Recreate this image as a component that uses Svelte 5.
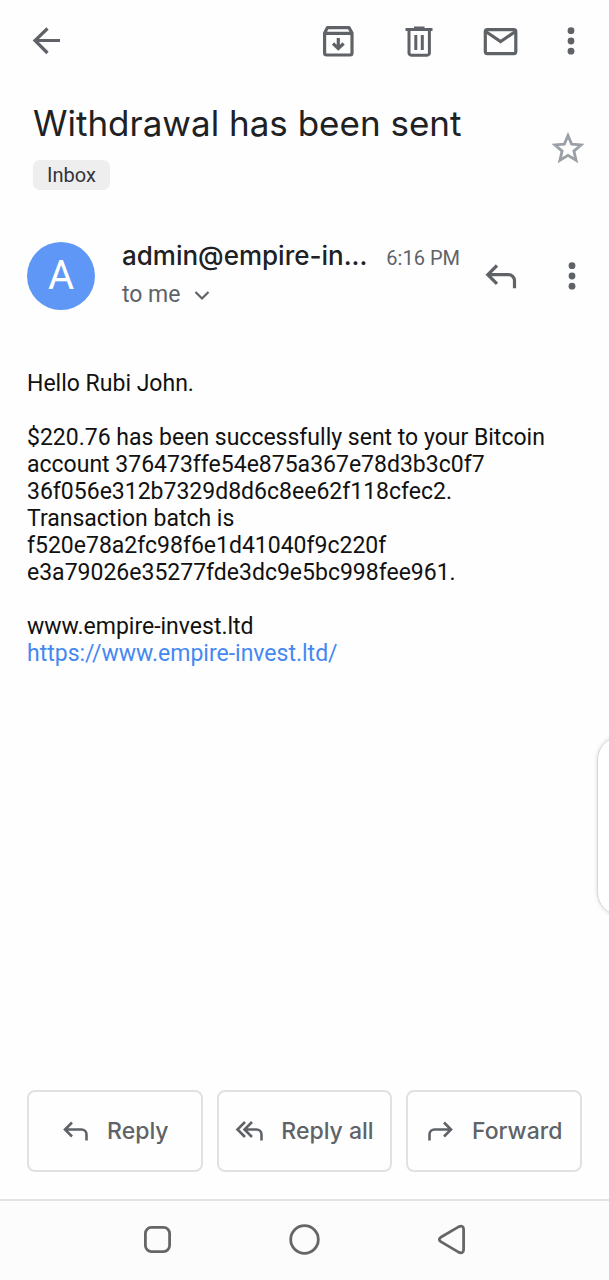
<script lang="ts">
	const subject = 'Withdrawal has been sent';
	const sender = 'admin@empire-in...';

	let starred = $state(false);
</script>

{#snippet dots()}
	<svg width="20" height="40" viewBox="0 0 20 40" fill="currentColor">
		<circle cx="10" cy="9.7" r="3.4" />
		<circle cx="10" cy="20" r="3.4" />
		<circle cx="10" cy="30.2" r="3.4" />
	</svg>
{/snippet}

<div class="screen">
	<header class="toolbar">
		<button class="icon-btn" aria-label="Navigate up">
			<svg width="40" height="40" viewBox="0 0 40 40" fill="none" stroke="currentColor" stroke-width="3.2">
				<path d="M33 19.5H8.5M20.5 7.5 8 19.5l12.5 12.5" />
			</svg>
		</button>
		<div class="toolbar-actions">
			<button class="icon-btn" aria-label="Archive">
				<svg width="40" height="40" viewBox="0 0 40 40" fill="none" stroke="currentColor" stroke-width="3.2" stroke-linejoin="round">
					<path d="M6.6 12 9.5 6.6h21.5L34 12v20a2 2 0 0 1-2 2H8.6a2 2 0 0 1-2-2zM6.6 12.4H34" />
					<path d="M20.3 17v10M15 22.5l5.3 5.1 5.3-5.1" stroke-linejoin="miter" />
				</svg>
			</button>
			<button class="icon-btn" aria-label="Delete">
				<svg width="40" height="40" viewBox="0 0 40 40" fill="none" stroke="currentColor" stroke-width="3">
					<path d="M6.5 8.5h27M15 7h10.5" />
					<path d="M10 8.5V32a2.2 2.2 0 0 0 2.2 2.2h16A2.2 2.2 0 0 0 30.4 32V8.5M16.8 14v15M23.3 14v15" />
				</svg>
			</button>
			<button class="icon-btn" aria-label="Mark as unread">
				<svg width="40" height="40" viewBox="0 0 40 40" fill="none" stroke="currentColor" stroke-width="3.2" stroke-linejoin="round">
					<rect x="5.3" y="8.6" width="30.5" height="24" rx="2" />
					<path d="m5.7 10.5 14.9 10 14.9-10" stroke-linejoin="miter" />
				</svg>
			</button>
			<button class="icon-btn narrow" aria-label="More options">{@render dots()}</button>
		</div>
	</header>

	<main>
		<section class="subject">
			<div class="subject-text">
				<h1>{subject}</h1>
				<span class="chip">Inbox</span>
			</div>
			<button
				class="star"
				class:starred
				aria-label="Star"
				aria-pressed={starred}
				onclick={() => (starred = !starred)}
			>
				<svg width="32" height="32" viewBox="0 0 32 32" fill="none" stroke="currentColor" stroke-width="2.8">
					<path d="m16 3.5 3.6 8.6 9.5.8-7.2 6.2 2.2 9.2-8.1-4.9-8.1 4.9 2.2-9.2-7.2-6.2 9.5-.8z" />
				</svg>
			</button>
		</section>

		<section class="sender">
			<div class="avatar">A</div>
			<div class="sender-info">
				<div class="sender-line">
					<span class="name">{sender}</span>
					<span class="time">6:16 PM</span>
				</div>
				<button class="recipients">
					to me
					<svg width="16" height="16" viewBox="0 0 16 16" fill="none" stroke="currentColor" stroke-width="2.2">
						<path d="m1.5 5 6.5 6.5L14.5 5" />
					</svg>
				</button>
			</div>
			<div class="sender-actions">
				<button class="icon-btn" aria-label="Reply">
					<svg width="40" height="40" viewBox="0 0 40 40" fill="none" stroke="currentColor" stroke-width="3.2">
						<path d="M16 9.5 6.8 18.7l9.2 9.2M7 18.7h20.5a6 6 0 0 1 6 6v7.5" />
					</svg>
				</button>
				<button class="icon-btn narrow" aria-label="More message options">{@render dots()}</button>
			</div>
		</section>

		<article class="message">
			<p>Hello Rubi John.</p>
			<p>
				$220.76 has been successfully sent to your Bitcoin<br />
				account 376473ffe54e875a367e78d3b3c0f7<br />
				36f056e312b7329d8d6c8ee62f118cfec2.<br />
				Transaction batch is<br />
				f520e78a2fc98f6e1d41040f9c220f<br />
				e3a79026e35277fde3dc9e5bc998fee961.
			</p>
			<p>
				www.empire-invest.ltd<br />
				<a href="https://www.empire-invest.ltd/">https://www.empire-invest.ltd/</a>
			</p>
		</article>
	</main>

	<div class="replies">
		<button class="reply-btn">
			<svg width="28" height="28" viewBox="0 0 28 28" fill="none" stroke="currentColor" stroke-width="2.6">
				<path d="M11 5.5 4 12.5l7 7M4.500 12.500h16a5 5 0 0 1 5 5v6" />
			</svg>
			Reply
		</button>
		<button class="reply-btn">
			<svg width="28" height="28" viewBox="0 0 28 28" fill="none" stroke="currentColor" stroke-width="2.6">
				<path d="m10 5-7.500 7.500L10 20M17 5l-7.500 7.500L17 20M10 12.500h11.500a5 5 0 0 1 5 5v6" />
			</svg>
			Reply all
		</button>
		<button class="reply-btn">
			<svg width="28" height="28" viewBox="0 0 28 28" fill="none" stroke="currentColor" stroke-width="2.6">
				<path d="m18 5.500 7 7-7 7M24.500 12.500H8.500a5 5 0 0 0-5 5v6" />
			</svg>
			Forward
		</button>
	</div>

	<nav class="system-nav" aria-label="System">
		<button aria-label="Recent apps">
			<svg width="40" height="40" viewBox="0 0 40 40" fill="none" stroke="currentColor" stroke-width="2.8">
				<rect x="7.4" y="7.4" width="24.2" height="24.2" rx="6" />
			</svg>
		</button>
		<button aria-label="Home">
			<svg width="40" height="40" viewBox="0 0 40 40" fill="none" stroke="currentColor" stroke-width="2.8">
				<circle cx="19.5" cy="19.5" r="13.8" />
			</svg>
		</button>
		<button aria-label="Back">
			<svg width="40" height="40" viewBox="0 0 40 40" fill="none" stroke="currentColor" stroke-width="2.8">
				<path d="M8.8 17.3 26.5 6.9Q31.6 4.7 31.6 9.500v20q0 4.800-5.100 2.600L8.800 21.700q-3-2.200 0-4.400z" />
			</svg>
		</button>
	</nav>

	<div class="edge-panel"></div>
</div>

<style>
	:global(body) {
		margin: 0;
		background: #fefefe;
	}

	.screen {
		position: relative;
		display: flex;
		flex-direction: column;
		min-height: 100vh;
		overflow: hidden;
		color: #5f6368;
		font-family: Roboto, sans-serif;
	}

	button {
		padding: 0;
		border: 0;
		background: none;
		color: inherit;
		font: inherit;
		cursor: pointer;
	}

	svg {
		display: block;
		flex: none;
	}

	.icon-btn {
		width: 40px;
		height: 40px;
	}

	.icon-btn.narrow {
		width: 20px;
	}

	.toolbar {
		display: flex;
		justify-content: space-between;
		align-items: center;
		height: 82px;
		padding: 0 28px 0 27px;
	}

	.toolbar-actions {
		display: flex;
		gap: 41px;
	}

	main {
		flex: 1;
		padding: 0 27px;
	}

	.subject {
		display: flex;
		justify-content: space-between;
		align-items: center;
		margin-right: -2px;
		padding: 16px 0 0 6px;
	}

	h1 {
		margin: 0 0 12px;
		color: #202124;
		font-family: Inter, sans-serif;
		font-size: 35px;
		font-weight: 400;
		line-height: 50px;
	}

	.chip {
		display: inline-block;
		padding: 0 14px;
		border-radius: 7px;
		background: #eeeeee;
		color: #333538;
		font-size: 20px;
		line-height: 30px;
	}

	.star {
		margin-top: 8px;
		color: #9aa0a6;
	}

	.star.starred svg {
		fill: currentColor;
	}

	.sender {
		display: flex;
		align-items: center;
		margin-top: 47px;
	}

	.avatar {
		flex: none;
		width: 68px;
		height: 68px;
		margin-right: 27px;
		border-radius: 50%;
		background: #5e97f6;
		color: #ffffff;
		font-size: 40px;
		line-height: 68px;
		text-align: center;
	}

	.sender-info {
		flex: 1;
		min-width: 0;
	}

	.sender-line {
		display: flex;
		align-items: baseline;
		gap: 19px;
		white-space: nowrap;
	}

	.name {
		color: #202124;
		font-family: Inter, sans-serif;
		font-size: 26px;
		font-weight: 500;
		line-height: 38px;
	}

	.time {
		font-size: 20px;
	}

	.recipients {
		display: flex;
		align-items: center;
		gap: 13px;
		font-size: 23px;
		line-height: 40px;
	}

	.sender-actions {
		display: flex;
		gap: 41px;
	}

	.message {
		margin-top: 55px;
		color: #111111;
		font-size: 23px;
		line-height: 27px;
	}

	.message p {
		margin: 0 0 27px;
	}

	.message a {
		color: #4688f1;
		text-decoration: none;
	}

	.replies {
		display: grid;
		grid-template-columns: repeat(3, 1fr);
		gap: 14px;
		padding: 0 27px 27px;
	}

	.reply-btn {
		display: flex;
		justify-content: center;
		align-items: center;
		gap: 18px;
		height: 82px;
		border: 2px solid #e0e1e3;
		border-radius: 8px;
		font-family: Inter, sans-serif;
		font-size: 23px;
		font-weight: 500;
		white-space: nowrap;
	}

	.system-nav {
		display: grid;
		grid-template-columns: repeat(3, 1fr);
		justify-items: center;
		padding: 19px 84px 20px;
		border-top: 2px solid #e2e2e2;
		background: #fcfcfc;
		color: #666666;
	}

	.edge-panel {
		position: absolute;
		right: -40px;
		bottom: 364px;
		width: 50px;
		height: 178px;
		border: 1px solid #d8d8d8;
		border-radius: 24px;
		background: #ffffff;
		box-shadow: 0 0 4px #dddddd;
	}
</style>
